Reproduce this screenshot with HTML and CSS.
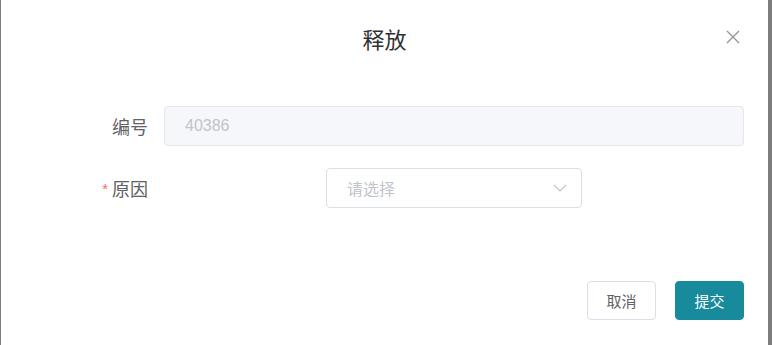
FILE: index.html
```html
<!DOCTYPE html>
<html>
<head>
    <title>释放</title>
    <link rel="stylesheet" href="styles.css">
</head>
<body>
    <div class="dialog">
        <!-- Header -->
        <div class="dialog-header">
            <span class="dialog-title">释放</span>
            <button class="dialog-close" aria-label="关闭">
                <svg width="14" height="14" viewBox="0 0 14 14">
                    <path d="M1 1 L13 13 M13 1 L1 13" stroke="#909399" stroke-width="1.3" fill="none"/>
                </svg>
            </button>
        </div>

        <!-- Form -->
        <div class="dialog-body">
            <div class="form-item">
                <label class="form-label">编号</label>
                <div class="form-content">
                    <input class="input is-disabled" type="text" value="40386" disabled>
                </div>
            </div>
            <div class="form-item">
                <label class="form-label required">原因</label>
                <div class="form-content center">
                    <div class="select">
                        <span class="placeholder">请选择</span>
                        <svg class="arrow" width="14" height="8" viewBox="0 0 14 8">
                            <path d="M1 1 L7 7 L13 1" stroke="#c0c4cc" stroke-width="1.2" fill="none"/>
                        </svg>
                    </div>
                </div>
            </div>
        </div>

        <!-- Footer -->
        <div class="dialog-footer">
            <button class="btn">取消</button>
            <button class="btn btn-primary">提交</button>
        </div>
    </div>
</body>
</html>
```

FILE: styles.css
```css
html, body {
    margin: 0;
    height: 100%;
}
body {
    background: #7d7d7d;
    font-family: "Liberation Sans", "Noto Sans CJK SC", sans-serif;
    overflow: hidden;
}
.dialog {
    margin-left: 1px;
    width: 767px;
    height: 345px;
    background: #fff;
    display: flex;
    flex-direction: column;
}
.dialog-header {
    position: relative;
    height: 82px;
    display: flex;
    justify-content: center;
    padding-top: 26px;
    box-sizing: border-box;
}
.dialog-title {
    font-size: 22px;
    line-height: 30px;
    color: #303133;
}
.dialog-close {
    position: absolute;
    top: 30px;
    right: 28px;
    padding: 0;
    border: none;
    background: none;
    cursor: pointer;
    line-height: 0;
}
.dialog-body {
    padding: 24px 24px 0 0;
}
.form-item {
    display: flex;
    align-items: center;
    margin-bottom: 22px;
}
.form-label {
    width: 163px;
    padding-right: 16px;
    box-sizing: border-box;
    text-align: right;
    font-size: 18px;
    color: #606266;
}
.form-label.required::before {
    content: "*";
    color: #f56c6c;
    font-size: 15px;
    margin-right: 4px;
    vertical-align: 2px;
}
.form-content {
    flex: 1;
    display: flex;
}
.form-content.center { justify-content: center; }
.input {
    width: 100%;
    height: 40px;
    box-sizing: border-box;
    border: 1px solid #e4e7ed;
    border-radius: 4px;
    padding: 0 20px;
    font-family: inherit;
    font-size: 16px;
    color: #c0c4cc;
    outline: none;
}
.input.is-disabled {
    background: #f5f7fa;
}
.select {
    width: 256px;
    height: 40px;
    box-sizing: border-box;
    border: 1px solid #dcdfe6;
    border-radius: 4px;
    padding: 0 14px 0 20px;
    display: flex;
    align-items: center;
    justify-content: space-between;
}
.placeholder {
    font-size: 16px;
    color: #c0c4cc;
}
.dialog-footer {
    margin-top: auto;
    display: flex;
    justify-content: flex-end;
    gap: 19px;
    padding: 0 24px 25px 0;
}
.btn {
    width: 69px;
    height: 39px;
    box-sizing: border-box;
    border: 1px solid #dcdfe6;
    border-radius: 4px;
    background: #fff;
    color: #606266;
    font-family: inherit;
    font-size: 15px;
    cursor: pointer;
}
.btn-primary {
    background: #178a9b;
    border-color: #178a9b;
    color: #fff;
}
```
